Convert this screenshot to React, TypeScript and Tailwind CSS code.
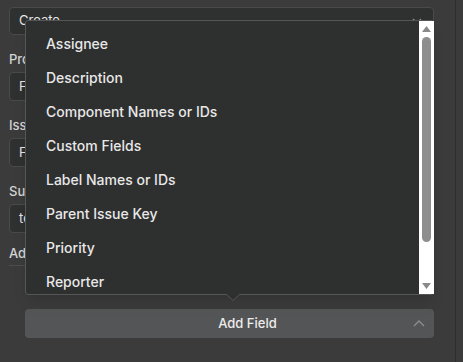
import React from 'react';

const items = [
  'Assignee',
  'Description',
  'Component Names or IDs',
  'Custom Fields',
  'Label Names or IDs',
  'Parent Issue Key',
  'Priority',
  'Reporter',
];

const Field = ({ label, value }: { label: string; value: string }) => (
  <div className="flex flex-col">
    <div className="mt-4 h-4 text-[13px] leading-4 font-medium text-[#d4d4d4]">{label}</div>
    <div className="mt-[5px] h-[29px] flex items-center pl-[9px] rounded-[4px] border border-[#4a4a4b] bg-[#2f3030] text-[13px] text-[#e6e6e6]">
      {value}
    </div>
  </div>
);

export default function App() {
  return (
    <div
      className="relative w-[463px] h-[362px] overflow-hidden bg-[#3b3b3c]"
      style={{ fontFamily: 'Inter, "Noto Sans", sans-serif' }}
    >
      <div className="w-[456px] h-full border-r border-[#2e2e2f] pl-[9px] pr-[21px] pt-[7px] flex flex-col">
        <div className="h-[28px] flex items-center justify-between px-[9px] rounded-[4px] border border-[#4a4a4b] bg-[#2f3030] text-[13px] text-[#e6e6e6]">
          <span>Create</span>
          <svg width="10" height="6" viewBox="0 0 10 6" className="mr-[2px]">
            <path d="M1 1l4 4 4-4" fill="none" stroke="#8a8a8a" strokeWidth="1.4" />
          </svg>
        </div>
        <Field label="Project" value="From list" />
        <Field label="Issue Type" value="Feature" />
        <Field label="Summary" value="test" />
        <div className="mt-3 h-4 text-[13px] leading-4 font-medium text-[#d4d4d4]">Additional Fields</div>
        <div className="mt-1 border-t border-[#4d4d4e]" />
        <button className="mt-[43px] ml-4 h-[29px] relative flex items-center justify-center pl-9 rounded-[4px] bg-[#545556] text-[13px] font-medium text-[#ececec]">
          Add Field
          <svg width="12" height="7" viewBox="0 0 12 7" className="absolute right-[9px]">
            <path d="M1 6l5-5 5 5" fill="none" stroke="#8d8d8d" strokeWidth="1.3" />
          </svg>
        </button>
      </div>

      {/* dropdown menu overlay */}
      <div className="absolute left-[25px] top-[20px] w-[409px] h-[275px] rounded-[3px] border border-[#555657] bg-[#2e2f2f] shadow-lg">
        <ul className="pt-[5px] pr-[16px]">
          {items.map((it) => (
            <li key={it} className="h-[34px] flex items-center px-5 text-[14px] font-medium text-[#e8e8e8]">
              {it}
            </li>
          ))}
        </ul>
        <div className="absolute top-0 right-[-1px] bottom-0 w-[15px] bg-white flex flex-col items-center">
          <svg width="9" height="6" viewBox="0 0 9 6" className="mt-[5px]">
            <path d="M4.5 0L9 6H0z" fill="#8a8a8a" />
          </svg>
          <div className="mt-[5px] w-[9px] h-[205px] rounded-full bg-[#8e8e8e]" />
          <div className="flex-1" />
          <svg width="9" height="6" viewBox="0 0 9 6" className="mb-[5px]">
            <path d="M0 0h9L4.5 6z" fill="#8a8a8a" />
          </svg>
        </div>
        <svg width="14" height="7" viewBox="0 0 14 7" className="absolute left-[200px] bottom-[-7px]">
          <path d="M0 0L7 6.5 14 0" fill="#2e2f2f" stroke="#555657" strokeWidth="1" />
        </svg>
      </div>
    </div>
  );
}
